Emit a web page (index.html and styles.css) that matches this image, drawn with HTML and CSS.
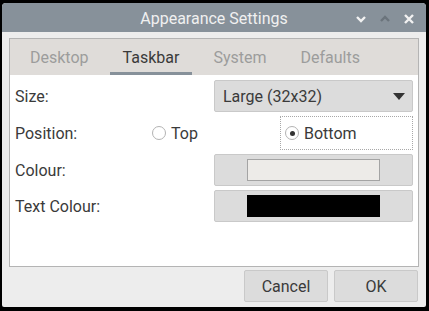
FILE: index.html
```html
<!DOCTYPE html>
<html lang="en">
<head>
    <meta charset="UTF-8">
    <title>Appearance Settings</title>
    <link rel="stylesheet" href="styles.css">
</head>
<body>
    <div class="window">
        <div class="titlebar">
            <span class="title">Appearance Settings</span>
            <div class="controls">
                <svg class="ctl" width="12" height="10" viewBox="0 0 12 10"><path d="M2 3 L6 7 L10 3" stroke="#f2f2f2" stroke-width="2.4" fill="none"/></svg>
                <svg class="ctl dim" width="12" height="10" viewBox="0 0 12 10"><path d="M2 7 L6 3 L10 7" stroke="#6b747c" stroke-width="2.4" fill="none"/></svg>
                <svg class="ctl" width="12" height="12" viewBox="0 0 12 12"><path d="M2 2 L10 10 M10 2 L2 10" stroke="#f2f2f2" stroke-width="2.4"/></svg>
            </div>
        </div>
        <div class="notebook">
            <div class="tabs">
                <div class="tab">Desktop</div>
                <div class="tab active">Taskbar</div>
                <div class="tab">System</div>
                <div class="tab">Defaults</div>
            </div>
            <div class="page">
                <div class="row two">
                    <div class="label">Size:</div>
                    <div class="combo">
                        <span>Large (32x32)</span>
                        <span class="arrow"></span>
                    </div>
                </div>
                <div class="row three pos">
                    <div class="label">Position:</div>
                    <div class="radio"><span class="dot"></span>Top</div>
                    <div class="radio focus"><span class="dot checked"></span>Bottom</div>
                </div>
                <div class="row two">
                    <div class="label">Colour:</div>
                    <div class="colorbtn"><span class="swatch light"></span></div>
                </div>
                <div class="row two">
                    <div class="label">Text Colour:</div>
                    <div class="colorbtn"><span class="swatch dark"></span></div>
                </div>
            </div>
        </div>
        <div class="actions">
            <button class="button">Cancel</button>
            <button class="button">OK</button>
        </div>
    </div>
</body>
</html>
```

FILE: styles.css
```css
body {
    margin: 0;
    background: #000;
    font-family: 'Roboto', 'Liberation Sans', sans-serif;
    font-size: 16px;
    color: #3a3a3a;
}
.window {
    width: 424px;
    height: 304px;
    margin: 3px 0 0 2px;
    background: #ededed;
    border-radius: 4px 4px 2px 2px;
    overflow: hidden;
    display: flex;
    flex-direction: column;
}
.titlebar {
    height: 29px;
    box-sizing: border-box;
    padding-top: 2px;
    background: #87919a;
    position: relative;
    display: flex;
    align-items: center;
    justify-content: center;
}
.title {
    color: #f0f0f0;
    font-size: 16px;
}
.controls {
    position: absolute;
    right: 11px;
    top: 10px;
    display: flex;
    gap: 12px;
    align-items: center;
}
.notebook {
    margin: 6px 7px 0 7px;
    border: 1px solid #b4b4b4;
    height: 227px;
    display: flex;
    flex-direction: column;
}
.tabs {
    height: 36px;
    background: #dfdcd9;
    display: flex;
    gap: 8px;
    padding-left: 7px;
}
.tab {
    padding: 3px 13px 0;
    display: flex;
    align-items: center;
    color: #9c9c9c;
    border-bottom: 3px solid transparent;
}
.tab.active {
    color: #3a3a3a;
    border-bottom-color: #87919a;
}
.page {
    flex: 1;
    background: #fff;
    padding: 5px 5px 0 5px;
}
.row {
    display: grid;
    align-items: center;
    height: 32px;
    margin-bottom: 4px;
}
.row.two {
    grid-template-columns: 199px 199px;
}
.row.three {
    grid-template-columns: 133px 132px 133px;
    height: 34px;
}
.label {
    color: #3a3a3a;
}
.combo {
    height: 30px;
    background: #dcdcdc;
    border: 1px solid #c9c9c9;
    border-radius: 2px;
    display: flex;
    align-items: center;
    justify-content: space-between;
    padding: 0 6px 0 8px;
}
.arrow {
    width: 0;
    height: 0;
    border-left: 6px solid transparent;
    border-right: 6px solid transparent;
    border-top: 7px solid #333;
    margin-right: 1px;
}
.radio {
    display: flex;
    align-items: center;
    height: 32px;
    padding-left: 4px;
    gap: 5px;
}
.radio.focus {
    border: 1px dotted #a8a8a8;
}
.dot {
    width: 12px;
    height: 12px;
    border: 1px solid #b3b3b3;
    border-radius: 50%;
    background: #fff;
    position: relative;
}
.dot.checked::after {
    content: "";
    position: absolute;
    left: 3.5px;
    top: 3.5px;
    width: 5px;
    height: 5px;
    border-radius: 50%;
    background: #333;
}
.colorbtn {
    height: 30px;
    background: #dcdcdc;
    border: 1px solid #c9c9c9;
    border-radius: 2px;
    display: flex;
    align-items: center;
    justify-content: center;
}
.swatch {
    width: 131px;
    height: 20px;
}
.swatch.light {
    background: #edebe8;
    border: 1px solid #a4a4a4;
}
.swatch.dark {
    background: #000;
    border: 1px solid #000;
}
.actions {
    display: flex;
    justify-content: flex-end;
    gap: 6px;
    padding: 3px 8px 0 0;
}
.button {
    width: 84px;
    height: 32px;
    background: #dcdcdc;
    border: 1px solid #c9c9c9;
    border-radius: 2px;
    font-family: inherit;
    font-size: 16px;
    color: #3a3a3a;
}
```
